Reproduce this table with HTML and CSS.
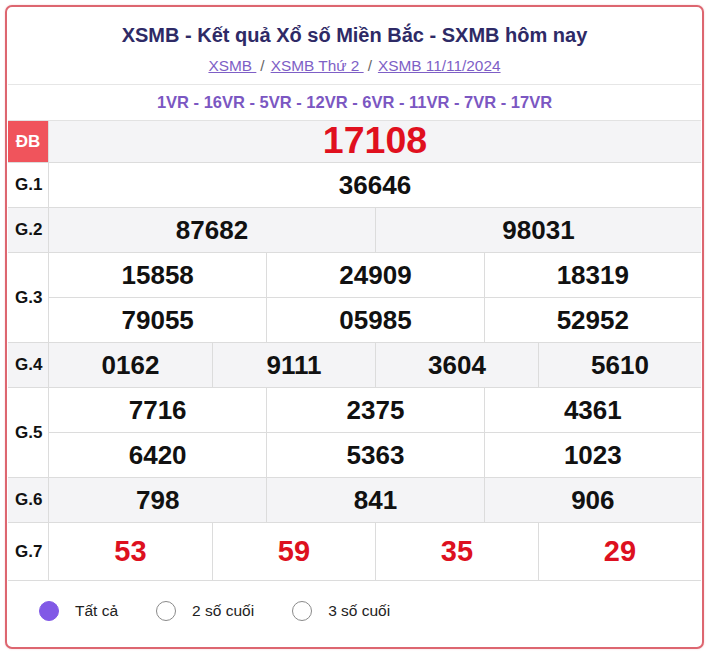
FILE: index.html
```html
<!DOCTYPE html>
<html lang="vi">
<head>
<meta charset="utf-8">
<title>XSMB</title>
<link rel="stylesheet" href="styles.css">
</head>
<body>
<div class="card">
  <div class="header">
    <h1 class="title">XSMB - Kết quả Xổ số Miền Bắc - SXMB hôm nay</h1>
    <div class="crumbs"><a href="#">XSMB </a><span class="sep">/</span><a href="#">XSMB Thứ 2 </a><span class="sep">/</span><a href="#">XSMB 11/11/2024</a></div>
  </div>
  <div class="codes">1VR - 16VR - 5VR - 12VR - 6VR - 11VR - 7VR - 17VR</div>
  <div class="table">
    <div class="row gray db-row">
      <div class="label db">ĐB</div>
      <div class="cells c1"><div class="cell special">17108</div></div>
    </div>
    <div class="row">
      <div class="label">G.1</div>
      <div class="cells c1"><div class="cell">36646</div></div>
    </div>
    <div class="row gray">
      <div class="label">G.2</div>
      <div class="cells c2"><div class="cell">87682</div><div class="cell">98031</div></div>
    </div>
    <div class="row">
      <div class="label">G.3</div>
      <div class="cells c3">
        <div class="cell">15858</div><div class="cell">24909</div><div class="cell">18319</div>
        <div class="cell r2">79055</div><div class="cell r2">05985</div><div class="cell r2">52952</div>
      </div>
    </div>
    <div class="row gray">
      <div class="label">G.4</div>
      <div class="cells c4"><div class="cell">0162</div><div class="cell">9111</div><div class="cell">3604</div><div class="cell">5610</div></div>
    </div>
    <div class="row">
      <div class="label">G.5</div>
      <div class="cells c3">
        <div class="cell">7716</div><div class="cell">2375</div><div class="cell">4361</div>
        <div class="cell r2">6420</div><div class="cell r2">5363</div><div class="cell r2">1023</div>
      </div>
    </div>
    <div class="row gray">
      <div class="label">G.6</div>
      <div class="cells c3"><div class="cell">798</div><div class="cell">841</div><div class="cell">906</div></div>
    </div>
    <div class="row g7-row">
      <div class="label">G.7</div>
      <div class="cells c4"><div class="cell red">53</div><div class="cell red">59</div><div class="cell red">35</div><div class="cell red">29</div></div>
    </div>
  </div>
  <div class="options">
    <label class="opt"><span class="radio checked"></span>Tất cả</label>
    <label class="opt"><span class="radio"></span>2 số cuối</label>
    <label class="opt"><span class="radio"></span>3 số cuối</label>
  </div>
</div>
</body>
</html>
```
FILE: styles.css
```css
* { box-sizing: border-box; }
html, body { margin: 0; padding: 0; background: #fff; }
body { font-family: "Liberation Sans", Arial, sans-serif; color: #111; }

.card {
  margin: 5px;
  width: 699px;
  height: 644px;
  border: 2px solid #dd6670;
  border-radius: 7px;
  box-shadow: 0 0 2px rgba(220, 100, 110, 0.35);
  padding: 0 1px;
  background: #fff;
}

.header {
  text-align: center;
  padding: 14px 0 8px;
  border-bottom: 1px solid #e6e6e6;
}
.title {
  margin: 0;
  font-size: 20px;
  line-height: 28px;
  font-weight: bold;
  color: #2e2a66;
}
.crumbs {
  margin-top: 7px;
  font-size: 15.4px;
  line-height: 20px;
  color: #666;
}
.crumbs a { color: #7e5fc6; text-decoration: underline; }
.crumbs .sep { margin: 0 6px 0 4px; }

.codes {
  height: 36px;
  line-height: 35px;
  text-align: center;
  font-size: 16.5px;
  font-weight: bold;
  color: #7b57c2;
  border-bottom: 1px solid #e2e2e2;
}

.table { border-bottom: 1px solid #dcdcdc; }
.row {
  display: grid;
  grid-template-columns: 41px 1fr;
  border-top: 1px solid #dcdcdc;
}
.row:first-child { border-top: 0; }
.row.gray { background: #f4f4f6; }
.label {
  display: flex;
  align-items: center;
  padding-left: 7px;
  font-size: 17px;
  font-weight: bold;
  color: #111;
  border-right: 1px solid #dcdcdc;
}
.label.db {
  background: #f0545c;
  color: #fff;
  justify-content: center;
  padding-left: 0;
}
.cells { display: grid; }
.c1 { grid-template-columns: 1fr; }
.c2 { grid-template-columns: repeat(2, 1fr); }
.c3 { grid-template-columns: repeat(3, 1fr); }
.c4 { grid-template-columns: repeat(4, 1fr); }
.cell {
  height: 44px;
  display: flex;
  align-items: center;
  justify-content: center;
  font-size: 26px;
  font-weight: bold;
  color: #111;
  border-left: 1px solid #dcdcdc;
}
.cell.r2 { height: 45px; border-top: 1px solid #dcdcdc; }
.c2 .cell:nth-child(2n+1),
.c3 .cell:nth-child(3n+1),
.c4 .cell:nth-child(4n+1),
.c1 .cell { border-left: 0; }
.db-row .cell { height: 41px; }
.special { font-size: 37.5px; color: #e0101e; padding-bottom: 2px; }
.g7-row .cell { height: 57px; }
.red { color: #dd1020; font-size: 29px; }

.options {
  display: flex;
  align-items: center;
  gap: 38px;
  padding: 20px 0 0 31px;
}
.opt {
  display: flex;
  align-items: center;
  gap: 16px;
  font-size: 15.5px;
  color: #222;
}
.radio {
  width: 20px;
  height: 20px;
  border-radius: 50%;
  border: 1px solid #8a8a8a;
  background: #fff;
}
.radio.checked { background: #8159e6; border-color: #8159e6; }
```
